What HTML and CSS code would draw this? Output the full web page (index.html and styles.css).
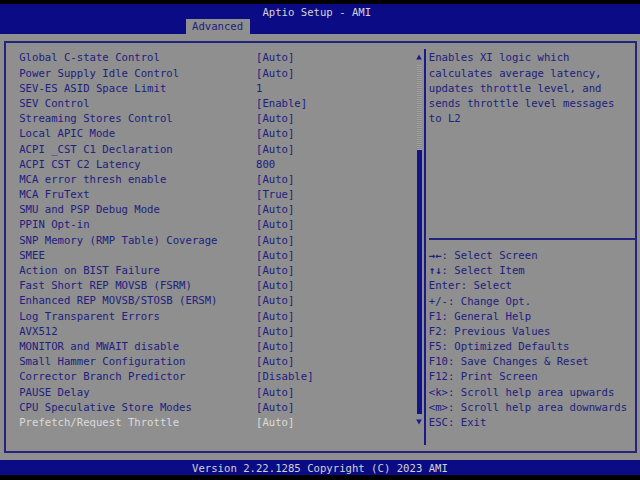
FILE: index.html
```html
<!DOCTYPE html>
<html>
<head>
<meta charset="utf-8">
<title>Aptio Setup - AMI</title>
<link rel="stylesheet" href="styles.css">
</head>
<body>
<div class="screen">
  <header class="top">
    <div class="title">Aptio Setup - AMI</div>
    <div class="tabs"><span class="tab">Advanced</span></div>
  </header>
  <main class="body">
    <div class="frame">
      <div class="list">
        <div class="row"><span>Global C-state Control</span><span>[Auto]</span></div>
        <div class="row"><span>Power Supply Idle Control</span><span>[Auto]</span></div>
        <div class="row"><span>SEV-ES ASID Space Limit</span><span>1</span></div>
        <div class="row"><span>SEV Control</span><span>[Enable]</span></div>
        <div class="row"><span>Streaming Stores Control</span><span>[Auto]</span></div>
        <div class="row"><span>Local APIC Mode</span><span>[Auto]</span></div>
        <div class="row"><span>ACPI _CST C1 Declaration</span><span>[Auto]</span></div>
        <div class="row"><span>ACPI CST C2 Latency</span><span>800</span></div>
        <div class="row"><span>MCA error thresh enable</span><span>[Auto]</span></div>
        <div class="row"><span>MCA FruText</span><span>[True]</span></div>
        <div class="row"><span>SMU and PSP Debug Mode</span><span>[Auto]</span></div>
        <div class="row"><span>PPIN Opt-in</span><span>[Auto]</span></div>
        <div class="row"><span>SNP Memory (RMP Table) Coverage</span><span>[Auto]</span></div>
        <div class="row"><span>SMEE</span><span>[Auto]</span></div>
        <div class="row"><span>Action on BIST Failure</span><span>[Auto]</span></div>
        <div class="row"><span>Fast Short REP MOVSB (FSRM)</span><span>[Auto]</span></div>
        <div class="row"><span>Enhanced REP MOVSB/STOSB (ERSM)</span><span>[Auto]</span></div>
        <div class="row"><span>Log Transparent Errors</span><span>[Auto]</span></div>
        <div class="row"><span>AVX512</span><span>[Auto]</span></div>
        <div class="row"><span>MONITOR and MWAIT disable</span><span>[Auto]</span></div>
        <div class="row"><span>Small Hammer Configuration</span><span>[Auto]</span></div>
        <div class="row"><span>Corrector Branch Predictor</span><span>[Disable]</span></div>
        <div class="row"><span>PAUSE Delay</span><span>[Auto]</span></div>
        <div class="row"><span>CPU Speculative Store Modes</span><span>[Auto]</span></div>
        <div class="row selected"><span>Prefetch/Request Throttle</span><span>[Auto]</span></div>
      </div>
      <div class="scroll">
        <div class="arrow"><svg width="6" height="6" viewBox="0 0 6 6"><polygon points="3,0.5 5.8,5.5 0.2,5.5" fill="#1a1a8c"/></svg></div>
        <div class="track"><div class="thumb"></div></div>
        <div class="arrow"><svg width="6" height="6" viewBox="0 0 6 6"><polygon points="0.2,0.5 5.8,0.5 3,5.5" fill="#1a1a8c"/></svg></div>
      </div>
      <div class="side">
        <div class="help">
          <div class="line">Enables XI logic which</div>
          <div class="line">calculates average latency,</div>
          <div class="line">updates throttle level, and</div>
          <div class="line">sends throttle level messages</div>
          <div class="line">to L2</div>
        </div>
        <div class="sep"></div>
        <div class="keys">
          <div class="line"><span class="keyglyph">→←</span>: Select Screen</div>
          <div class="line"><span class="keyglyph">↑↓</span>: Select Item</div>
          <div class="line">Enter: Select</div>
          <div class="line">+/-: Change Opt.</div>
          <div class="line">F1: General Help</div>
          <div class="line">F2: Previous Values</div>
          <div class="line">F5: Optimized Defaults</div>
          <div class="line">F10: Save Changes &amp; Reset</div>
          <div class="line">F12: Print Screen</div>
          <div class="line">&lt;k&gt;: Scroll help area upwards</div>
          <div class="line">&lt;m&gt;: Scroll help area downwards</div>
          <div class="line">ESC: Exit</div>
        </div>
      </div>
    </div>
  </main>
  <footer class="bottom">Version 2.22.1285 Copyright (C) 2023 AMI</footer>
</div>
</body>
</html>
```
FILE: styles.css
```css
html, body {
  margin: 0;
  padding: 0;
  background: #000;
}
.screen {
  width: 640px;
  height: 480px;
  padding-top: 3.8px;
  box-sizing: border-box;
  font-family: "DejaVu Sans Mono", "Liberation Mono", monospace;
  font-size: 10.63px;
  line-height: 17px;
  color: #20207e;
  white-space: nowrap;
}
.top {
  background: #0b0b86;
  height: 30.4px;
}
.title {
  height: 15.2px;
  padding-left: 262.4px;
  color: #d2d2d2;
}
.tabs {
  height: 15.2px;
  padding-left: 185.6px;
}
.tab {
  display: inline-block;
  vertical-align: top;
  height: 15.2px;
  line-height: 16px;
  padding: 0 6.4px;
  background: #8f8f8f;
  color: #20207e;
}
.body {
  background: #8f8f8f;
  height: 425.6px;
  box-sizing: border-box;
  padding: 6.8px 3px 0 4px;
}
.frame {
  display: flex;
  border: 2px solid #24247e;
  padding: 6.4px 0;
  height: 412px;
  box-sizing: border-box;
}
.list {
  width: 410px;
  padding-left: 13.2px;
  box-sizing: border-box;
}
.row {
  display: grid;
  grid-template-columns: 236.8px auto;
  height: 15.2px;
}
.row.selected {
  color: #dcdcdc;
}
.scroll {
  width: 6.4px;
  display: flex;
  flex-direction: column;
  height: 380px;
}
.arrow {
  height: 15.2px;
  flex: none;
  display: flex;
  align-items: center;
  justify-content: center;
}
.arrow svg {
  display: block;
}
.track {
  flex: 1;
  display: flex;
  flex-direction: column;
  justify-content: flex-end;
  margin: 0 0.6px 0 0.8px;
  background: repeating-linear-gradient(to bottom, #a2a2a2 0 1px, #868686 1px 2px);
}
.thumb {
  height: 264px;
  background: #14148a;
}
.side {
  flex: 1;
  margin-left: 2px;
  border-left: 2px solid #1a1a8c;
  padding-left: 2.4px;
  display: flex;
  flex-direction: column;
}
.help {
  height: 182.4px;
  flex: none;
}
.line {
  height: 15.2px;
}
.keyglyph {
  font-weight: bold;
}
.sep {
  height: 15.2px;
  flex: none;
  display: flex;
  align-items: center;
}
.sep::before {
  content: "";
  display: block;
  width: 100%;
  height: 2px;
  background: #24247e;
}
.bottom {
  background: #0b0b86;
  height: 15.2px;
  padding-left: 192px;
  color: #d2d2d2;
}
```
